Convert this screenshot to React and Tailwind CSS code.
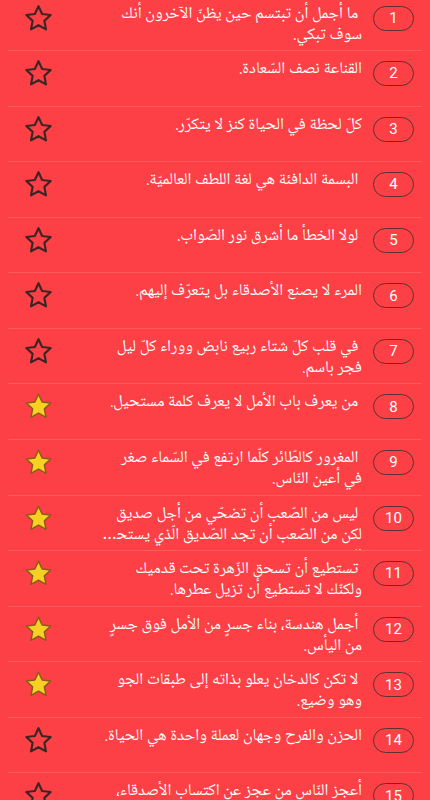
import React from "react";

const NB = "\u00A0";
const quotes = [
  { t: NB + "ما أجمل أن تبتسم حين يظنّ الآخرون أنك سوف تبكي.", f: false },
  { t: "القناعة نصف السّعادة.", f: false },
  { t: "كلّ لحظة في الحياة كنز لا يتكرّر.", f: false },
  { t: NB + "البسمة الدافئة هي لغة اللطف العالميّة.", f: false },
  { t: NB + "لولا الخطأ ما أشرق نور الصّواب.", f: false },
  { t: "المرء لا يصنع الأصدقاء بل يتعرّف إليهم.", f: false },
  { t: NB + "في قلب كلّ شتاء ربيع نابض ووراء كلّ ليل فجر باسم.", f: false },
  { t: NB + "من يعرف باب الأمل لا يعرف كلمة مستحيل.", f: true },
  { t: NB + "المغرور كالطّائر كلّما ارتفع في السّماء صغر في" + NB + "أعين النّاس.", f: true },
  { t: NB + "ليس من الصّعب أن تضحّي من أجل صديق لكن من الصّعب أن تجد الصّديق الّذي يستحق التضحية.", f: true },
  { t: NB + "تستطيع أن تسحق الزّهرة تحت قدميك ولكنّك لا تستطيع أن تزيل عطرها.", f: true },
  { t: NB + "أجمل هندسة، بناء جسرٍ من الأمل فوق جسرٍ من اليأس.", f: true },
  { t: NB + "لا تكن كالدخان يعلو بذاته إلى طبقات الجو وهو وضيع.", f: true },
  { t: "الحزن والفرح وجهان لعملة واحدة هي الحياة.", f: false },
  { t: "أعجز النّاس من عجز عن اكتساب الأصدقاء، وأعجز منه من ضيّع من ظفر به منهم.", f: false },
];

function Star({ filled }) {
  return (
    <svg width="27" height="27" viewBox="2 2 20 20">
      <path
        d="M12 2.9l2.7 5.75 6.3.78-4.65 4.35 1.2 6.25L12 16.95l-5.55 3.08 1.2-6.25L3 9.43l6.3-.78z"
        fill={filled ? "#f8d023" : "none"}
        stroke={filled ? "#8a5a1a" : "#3d2525"}
        strokeWidth={filled ? 1.1 : 1.6}
        strokeLinejoin="round"
      />
    </svg>
  );
}

export default function App() {
  return (
    <div className="w-[430px] h-[800px] overflow-hidden bg-[#fd4045]">
      <div className="-mt-[4.5px] flex flex-col">
        {quotes.map((q, i) => (
          <div key={i} className="h-[55.57px] flex flex-col shrink-0">
            <div className="flex-1 flex flex-row min-h-0">
              <div className="w-[99px] shrink-0 pl-[24.5px] pt-[9px]">
                <Star filled={q.f} />
              </div>
              <div
                dir="rtl"
                className="flex-1 min-w-0 pt-[8px] text-right text-white text-[16.5px] leading-[21px] line-clamp-2"
                style={{ fontFamily: '"Noto Naskh Arabic", "Noto Sans Arabic", "DejaVu Sans", sans-serif' }}
              >
                {q.t}
              </div>
              <div className="shrink-0 ml-[11px] mr-[16px] pt-[10px]">
                <div className="w-[41px] h-[25px] rounded-full border-[1.5px] border-[#5e3030] flex items-center justify-center text-white text-[15px] font-['Roboto',sans-serif]">
                  {i + 1}
                </div>
              </div>
            </div>
            <div className="mx-[8px] h-px bg-[#fd5a5e] shrink-0" />
          </div>
        ))}
      </div>
    </div>
  );
}
